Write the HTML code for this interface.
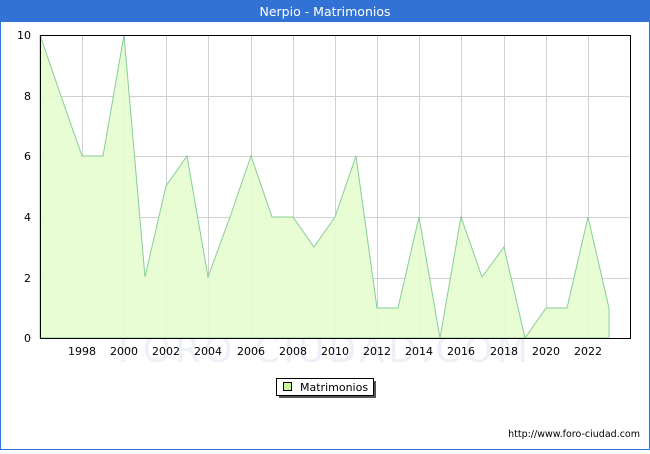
<!DOCTYPE html>
<html><head><style>
body{margin:0;width:650px;height:450px;overflow:hidden;font-family:"DejaVu Sans","Liberation Sans",sans-serif;}
</style></head><body>
<svg width="650" height="450" xmlns="http://www.w3.org/2000/svg" font-family="DejaVu Sans, Liberation Sans, sans-serif">
<rect x="0" y="0" width="650" height="450" fill="#fff"/>
<rect x="0.5" y="0.5" width="649" height="449" fill="none" stroke="#3272d4"/>
<rect x="0" y="0" width="650" height="22" fill="#3272d4"/>
<text x="325" y="16" fill="#fff" font-size="12.5" text-anchor="middle">Nerpio - Matrimonios</text>
<g stroke="#d0d0d0" stroke-width="1">
<line x1="82.5" y1="35" x2="82.5" y2="338"/><line x1="124.5" y1="35" x2="124.5" y2="338"/>
<line x1="166.5" y1="35" x2="166.5" y2="338"/><line x1="208.5" y1="35" x2="208.5" y2="338"/>
<line x1="251.5" y1="35" x2="251.5" y2="338"/><line x1="293.5" y1="35" x2="293.5" y2="338"/>
<line x1="335.5" y1="35" x2="335.5" y2="338"/><line x1="377.5" y1="35" x2="377.5" y2="338"/>
<line x1="419.5" y1="35" x2="419.5" y2="338"/><line x1="461.5" y1="35" x2="461.5" y2="338"/>
<line x1="504.5" y1="35" x2="504.5" y2="338"/><line x1="546.5" y1="35" x2="546.5" y2="338"/>
<line x1="588.5" y1="35" x2="588.5" y2="338"/>
<line x1="40" y1="96.5" x2="630" y2="96.5"/><line x1="40" y1="156.5" x2="630" y2="156.5"/>
<line x1="40" y1="217.5" x2="630" y2="217.5"/><line x1="40" y1="278.5" x2="630" y2="278.5"/>
</g>
<text x="325" y="362" fill="#eef0f8" font-size="36" text-anchor="middle" letter-spacing="4">FORO-CIUDAD.COM</text>
<polygon fill="#e5fdcf" fill-opacity="0.9" stroke="#88cc99" stroke-width="1" points="40,338 40,35 61,96 82,156 103,156 124,35 145,277 166,186 187,156 208,277 230,217 251,156 272,217 293,217 314,247 335,217 356,156 377,308 398,308 419,217 440,338 461,217 482,277 504,247 525,338 546,308 567,308 588,217 609,308 609,338"/>
<rect x="40.5" y="35.5" width="590" height="303" fill="none" stroke="#000"/>
<g font-size="11" fill="#000">
<text x="31" y="39" text-anchor="end">10</text>
<text x="31" y="100" text-anchor="end">8</text>
<text x="31" y="160" text-anchor="end">6</text>
<text x="31" y="221" text-anchor="end">4</text>
<text x="31" y="282" text-anchor="end">2</text>
<text x="31" y="342" text-anchor="end">0</text>
<g text-anchor="middle">
<text x="82" y="355">1998</text><text x="124" y="355">2000</text><text x="166" y="355">2002</text>
<text x="208" y="355">2004</text><text x="251" y="355">2006</text><text x="293" y="355">2008</text>
<text x="335" y="355">2010</text><text x="377" y="355">2012</text><text x="419" y="355">2014</text>
<text x="461" y="355">2016</text><text x="504" y="355">2018</text><text x="546" y="355">2020</text>
<text x="588" y="355">2022</text>
</g>
</g>
<rect x="279" y="381" width="97" height="17" fill="#555"/>
<rect x="276.5" y="378.5" width="97" height="17" fill="#fff" stroke="#000"/>
<rect x="283.5" y="382.5" width="8" height="8" fill="#ccf5a0" stroke="#000"/>
<text x="300" y="391" font-size="11">Matrimonios</text>
<text x="640" y="437" font-size="9.5" text-anchor="end">http://www.foro-ciudad.com</text>
</svg>
</body></html>
